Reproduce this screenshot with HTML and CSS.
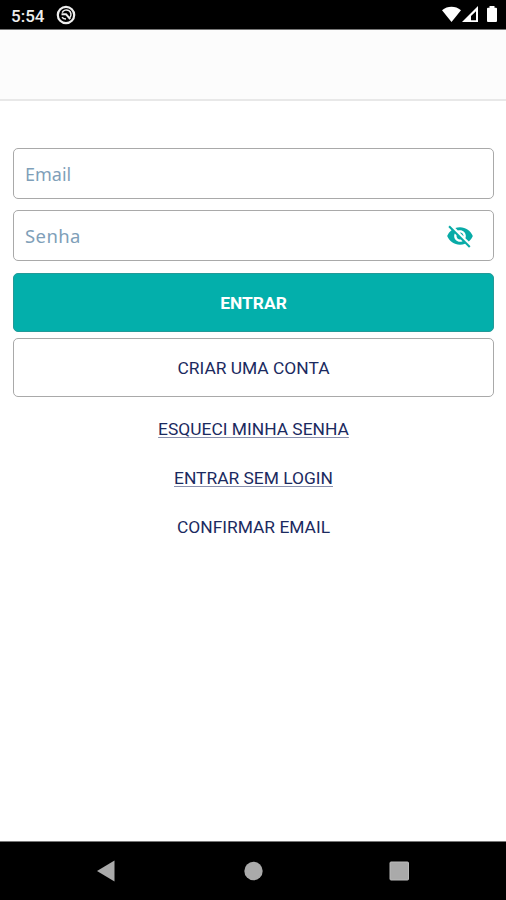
FILE: index.html
```html
<!DOCTYPE html>
<html lang="pt-BR">
<head>
<meta charset="utf-8">
<title>Entrar</title>
<link rel="stylesheet" href="styles.css">
</head>
<body>
<div class="screen">
  <header class="status">
    <span class="time">5:54</span>
    <svg class="app-icon" width="20" height="20" viewBox="0 0 20 20" fill="none" stroke="#eee">
      <circle cx="10" cy="10" r="8.2" stroke-width="2.2"/>
      <path d="M6.2 7.6A4.6 4.6 0 1 1 13.8 12.6" stroke-width="1.5"/>
      <path d="M5.5 9.2H10L14.2 14" stroke-width="2"/>
      <path d="M6 12.2Q7.5 14 10 14" stroke-width="1.5"/>
    </svg>
    <svg class="signals" width="56" height="18" viewBox="0 0 56 18" fill="#fff">
      <path d="M0 4.2C5.6-.4 13.4-.4 19 4.2L9.5 16z"/>
      <path fill-rule="evenodd" d="M20 16L36 0V16zM29 14.2H34V5.2L29 10z"/>
      <path d="M46 1.7H47.5V0H52.5V1.7H54Q55 1.7 55 2.7V15Q55 16 54 16H46Q45 16 45 15V2.7Q45 1.7 46 1.7z"/>
    </svg>
  </header>
  <div class="appbar"></div>
  <main class="form">
    <div class="field email"><span class="hint">Email</span></div>
    <div class="field senha"><span class="hint">Senha</span>
      <svg class="eye" width="28" height="28" viewBox="0 0 24 24" fill="#08aba7"><path d="M12 7c2.76 0 5 2.24 5 5 0 .65-.13 1.26-.36 1.83l2.92 2.92c1.51-1.26 2.7-2.89 3.43-4.75-1.73-4.39-6-7.5-11-7.5-1.4 0-2.74.25-3.98.7l2.16 2.16C10.74 7.13 11.35 7 12 7zM2 4.27l2.28 2.28.46.46C3.08 8.3 1.78 10.02 1 12c1.73 4.39 6 7.5 11 7.5 1.55 0 3.03-.3 4.38-.84l.42.42L19.73 22 21 20.73 3.27 3 2 4.27zM7.53 9.8l1.55 1.55c-.05.21-.08.43-.08.65 0 1.66 1.34 3 3 3 .22 0 .44-.03.65-.08l1.55 1.55c-.67.33-1.41.53-2.2.53-2.76 0-5-2.24-5-5 0-.79.2-1.53.53-2.2zm4.31-.78l3.15 3.15.02-.16c0-1.66-1.34-3-3-3l-.17.01z"/></svg>
    </div>
    <div class="button primary"><span>ENTRAR</span></div>
    <div class="button outline"><span>CRIAR UMA CONTA</span></div>
    <nav class="links">
      <a class="link under forgot">ESQUECI MINHA SENHA</a>
      <a class="link under guest">ENTRAR SEM LOGIN</a>
      <a class="link confirm">CONFIRMAR EMAIL</a>
    </nav>
  </main>
  <footer class="navbar">
    <svg width="20" height="22" viewBox="0 0 20 22"><path d="M1 11L18.5 .5V21.5z" fill="#aaa"/></svg>
    <svg width="20" height="20" viewBox="0 0 20 20"><circle cx="10.5" cy="10" r="9.2" fill="#aaa"/></svg>
    <svg width="20" height="20" viewBox="0 0 20 20"><rect x="1" y="1" width="18.5" height="18" rx="1" fill="#aaa" stroke="#bbb"/></svg>
  </footer>
</div>
</body>
</html>
```
FILE: styles.css
```css
* { box-sizing: border-box; }
body { margin: 0; background: #fff; font-family: Roboto, sans-serif; }
.screen { width: 506px; height: 900px; display: flex; flex-direction: column; overflow: hidden; }
.status { height: 30px; background: #000; border-bottom: 1px solid #777; display: flex; align-items: center; padding: 1px 8px 0 11px; color: #eee; }
.time { font-size: 17px; font-weight: 500; line-height: 20px; width: 45px; padding-top: 1px; }
.signals { margin-left: auto; }
.appbar { height: 71px; background: #fcfcfc; border-bottom: 2px solid #e8e8e8; flex: none; }
.form { flex: 1; padding: 47px 12px 0 13px; display: flex; flex-direction: column; }
.field { height: 51px; border: 1px solid #a9a9a9; border-radius: 5px; display: flex; align-items: center; justify-content: space-between; padding: 0 19px 0 11px; margin-bottom: 11px; }
.hint { font-family: "Noto Sans", sans-serif; font-size: 18px; line-height: 24px; color: #7f9fb9; }
.senha .hint { font-size: 18.5px; letter-spacing: 0.4px; }
.button { height: 59px; border-radius: 5px; display: flex; align-items: center; justify-content: center; font-size: 17.4px; line-height: 22px; }
.primary { background: #03afab; border: 1px solid #239a98; color: #fff; font-weight: 700; margin: 1px 0 6px; padding-top: 1px; }
.outline { border: 1px solid #a9a9a9; color: #1b2a60; padding-top: 1px; }
.links { display: flex; flex-direction: column; align-items: center; gap: 27px; padding-top: 21px; }
.link { font-size: 17.4px; line-height: 22px; color: #1b2a60; }
.under { text-decoration: underline; text-decoration-color: #8990ad; text-decoration-thickness: 1px; text-underline-offset: 2px; }
.navbar { height: 59px; background: #000; border-top: 1px solid #777; display: flex; align-items: center; justify-content: space-between; padding: 0 97px 0 96px; }
```
